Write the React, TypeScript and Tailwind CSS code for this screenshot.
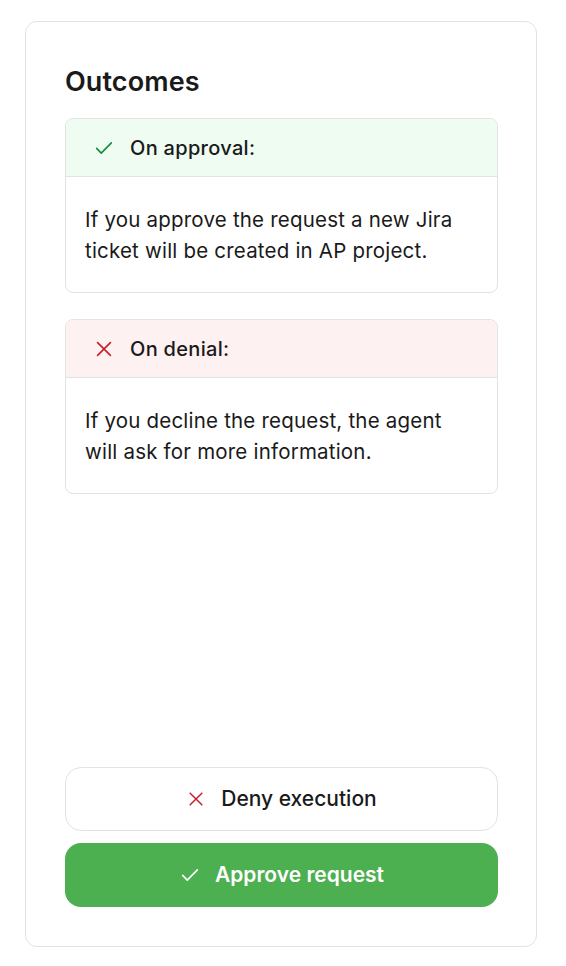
import React from "react";

const Check = ({ className }: { className?: string }) => (
  <svg viewBox="0 0 24 24" className={className} fill="none" stroke="currentColor" strokeWidth={1.8} strokeLinecap="round" strokeLinejoin="round">
    <path d="M4 12.5l5 5L20 6.5" />
  </svg>
);

const Cross = ({ className }: { className?: string }) => (
  <svg viewBox="0 0 24 24" className={className} fill="none" stroke="currentColor" strokeWidth={1.8} strokeLinecap="round">
    <path d="M5 5l14 14M19 5L5 19" />
  </svg>
);

export default function App() {
  return (
    <div className="min-h-screen bg-white pt-[21px] px-[25px] pb-[19px]" style={{ fontFamily: "Inter, 'Noto Sans', sans-serif" }}>
      <div className="h-[926px] w-[512px] rounded-[12px] border border-[#e3e3e3] bg-white pl-[39px] pr-[38px] pt-[43px] pb-[39px] flex flex-col">
        <h1 className="text-[27px] leading-[34px] font-semibold text-[#1a1a1a] tracking-[0.1px]">Outcomes</h1>
        <div className="mt-[19px] rounded-[8px] border border-[#e3e3e3] overflow-hidden">
          <div className="h-[58px] bg-[#eefcf2] border-b border-[#e3e3e3] flex items-center pl-[27px] gap-[15px]">
            <Check className="w-[22px] h-[22px] text-[#1d8a3a]" />
            <span className="text-[20px] text-[#1a1a1a] font-medium tracking-[0.3px]">On approval:</span>
          </div>
          <div className="px-[19px] pt-[27px] pb-[26px] text-[20.5px] leading-[31px] tracking-[0.2px] text-[#1a1a1a]">
            If you approve the request a new Jira ticket will be created in AP project.
          </div>
        </div>
        <div className="mt-[26px] rounded-[8px] border border-[#e3e3e3] overflow-hidden">
          <div className="h-[58px] bg-[#fef1f1] border-b border-[#e3e3e3] flex items-center pl-[27px] gap-[15px]">
            <Cross className="w-[22px] h-[22px] text-[#c8202b]" />
            <span className="text-[20px] text-[#1a1a1a] font-medium tracking-[0.3px]">On denial:</span>
          </div>
          <div className="px-[19px] pt-[27px] pb-[26px] text-[20.5px] leading-[31px] tracking-[0.2px] text-[#1a1a1a]">
            If you decline the request, the agent will ask for more information.
          </div>
        </div>
        <div className="flex-1" />
        <button className="h-[64px] w-full rounded-[16px] border border-[#e3e3e3] bg-white flex items-center justify-center gap-[15px] text-[21px] font-medium text-[#1a1a1a]">
          <Cross className="w-[20px] h-[20px] text-[#c8202b]" />
          Deny execution
        </button>
        <button className="mt-[12px] h-[64px] w-full rounded-[16px] bg-[#4caf50] flex items-center justify-center gap-[14px] text-[21px] font-semibold text-white">
          <Check className="w-[22px] h-[22px] text-white" />
          Approve request
        </button>
      </div>
    </div>
  );
}
